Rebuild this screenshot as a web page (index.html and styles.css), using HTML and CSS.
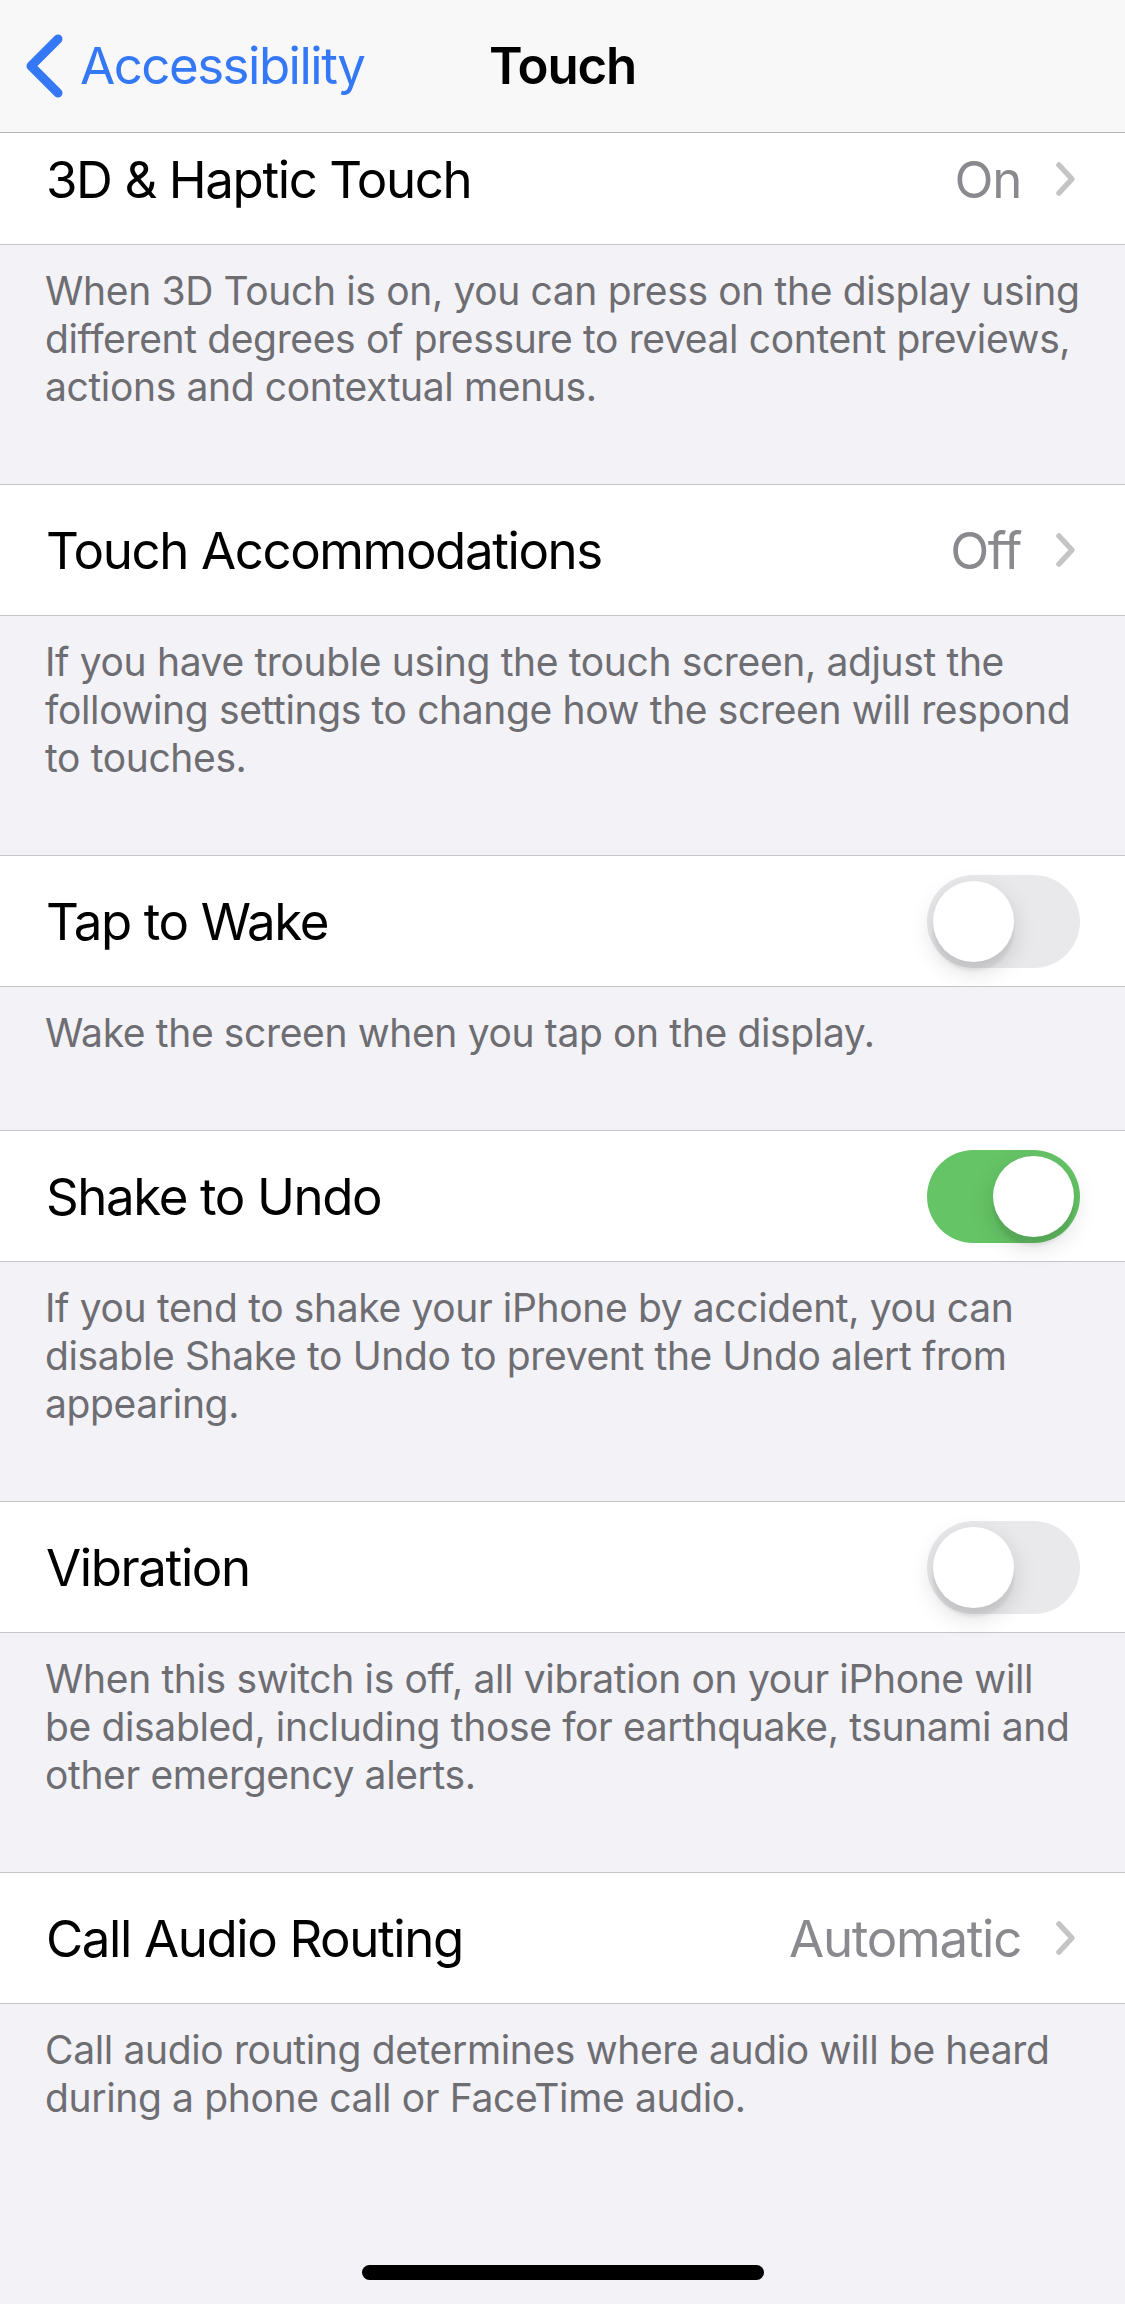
FILE: index.html
```html
<!DOCTYPE html>
<html lang="en">
<head>
<meta charset="utf-8">
<title>Touch</title>
<link rel="stylesheet" href="styles.css">
</head>
<body>
<div class="screen">
  <header class="nav">
    <div class="nav-back">
      <svg class="back-chevron" width="44" height="66" viewBox="0 0 44 66"><path d="M36 6 L9 33 L36 60" fill="none" stroke="#3478f6" stroke-width="9" stroke-linecap="round" stroke-linejoin="round"/></svg>
      <span class="back-label">Accessibility</span>
    </div>
    <div class="nav-title">Touch</div>
    <div class="nav-spacer"></div>
  </header>

  <section class="group">
    <div class="cell cell-first">
      <span class="label">3D &amp; Haptic Touch</span>
      <span class="value">On</span>
      <svg class="chevron" width="22" height="36" viewBox="0 0 22 36"><path d="M4 4 L17 18 L4 32" fill="none" stroke="#c4c4c7" stroke-width="5.5" stroke-linecap="round" stroke-linejoin="round"/></svg>
    </div>
    <p class="footer">When 3D Touch is on, you can press on the display using<br>different degrees of pressure to reveal content previews,<br>actions and contextual menus.</p>
  </section>

  <section class="group">
    <div class="cell">
      <span class="label">Touch Accommodations</span>
      <span class="value">Off</span>
      <svg class="chevron" width="22" height="36" viewBox="0 0 22 36"><path d="M4 4 L17 18 L4 32" fill="none" stroke="#c4c4c7" stroke-width="5.5" stroke-linecap="round" stroke-linejoin="round"/></svg>
    </div>
    <p class="footer">If you have trouble using the touch screen, adjust the<br>following settings to change how the screen will respond<br>to touches.</p>
  </section>

  <section class="group">
    <div class="cell">
      <span class="label">Tap to Wake</span>
      <span class="switch"><span class="knob"></span></span>
    </div>
    <p class="footer">Wake the screen when you tap on the display.</p>
  </section>

  <section class="group">
    <div class="cell">
      <span class="label">Shake to Undo</span>
      <span class="switch on"><span class="knob"></span></span>
    </div>
    <p class="footer">If you tend to shake your iPhone by accident, you can<br>disable Shake to Undo to prevent the Undo alert from<br>appearing.</p>
  </section>

  <section class="group">
    <div class="cell">
      <span class="label">Vibration</span>
      <span class="switch"><span class="knob"></span></span>
    </div>
    <p class="footer">When this switch is off, all vibration on your iPhone will<br>be disabled, including those for earthquake, tsunami and<br>other emergency alerts.</p>
  </section>

  <section class="group">
    <div class="cell">
      <span class="label">Call Audio Routing</span>
      <span class="value">Automatic</span>
      <svg class="chevron" width="22" height="36" viewBox="0 0 22 36"><path d="M4 4 L17 18 L4 32" fill="none" stroke="#c4c4c7" stroke-width="5.5" stroke-linecap="round" stroke-linejoin="round"/></svg>
    </div>
    <p class="footer">Call audio routing determines where audio will be heard<br>during a phone call or FaceTime audio.</p>
  </section>

  <div class="home-indicator"></div>
</div>
</body>
</html>
```

FILE: styles.css
```css
* {
  box-sizing: border-box;
}

html, body {
  margin: 0;
  padding: 0;
}

body {
  background: #f2f2f7;
  font-family: Inter, "Noto Sans", "Liberation Sans", sans-serif;
  color: #000;
}

.screen {
  position: relative;
  width: 1125px;
  height: 2304px;
  overflow: hidden;
  background: #f2f2f7;
}

.nav {
  height: 133px;
  background: #f8f8f9;
  border-bottom: 1px solid #b3b3b5;
  display: grid;
  grid-template-columns: 1fr auto 1fr;
  align-items: center;
  padding-bottom: 1px;
}

.nav-back {
  display: flex;
  align-items: center;
  padding-left: 22px;
  gap: 14px;
}

.back-label {
  font-size: 51px;
  color: #3478f6;
  letter-spacing: -1.5px;
}

.nav-title {
  font-size: 51px;
  font-weight: 600;
  letter-spacing: -1.2px;
}

.group {
  display: block;
}

.cell {
  height: 132px;
  background: #fff;
  border-top: 1px solid #c6c6c8;
  border-bottom: 1px solid #c6c6c8;
  display: flex;
  align-items: center;
  padding: 0 45px 0 46px;
}

.cell-first {
  height: 112px;
  border-top: none;
  padding-bottom: 19px;
}

.label {
  flex: 1;
  font-size: 51px;
  letter-spacing: -1.4px;
}

.value {
  font-size: 51px;
  color: #8a8a8e;
  letter-spacing: -1.3px;
}

.chevron {
  margin-left: 34px;
  margin-right: 3px;
  display: block;
}

.footer {
  margin: 0;
  padding: 22px 45px 73px 45px;
  font-size: 39px;
  line-height: 48px;
  color: #6d6d72;
  letter-spacing: -0.36px;
  white-space: nowrap;
}

.switch {
  width: 153px;
  height: 93px;
  border-radius: 47px;
  background: #e9e9eb;
  position: relative;
  display: block;
}

.switch .knob {
  position: absolute;
  top: 6px;
  left: 6px;
  width: 81px;
  height: 81px;
  border-radius: 50%;
  background: #fff;
  box-shadow: 0 9px 24px rgba(0, 0, 0, 0.15), 0 9px 3px rgba(0, 0, 0, 0.06);
}

.switch.on {
  background: #65c466;
}

.switch.on .knob {
  left: 66px;
}

.home-indicator {
  position: absolute;
  left: 362px;
  bottom: 24px;
  width: 402px;
  height: 15px;
  border-radius: 8px;
  background: #000;
}
```
